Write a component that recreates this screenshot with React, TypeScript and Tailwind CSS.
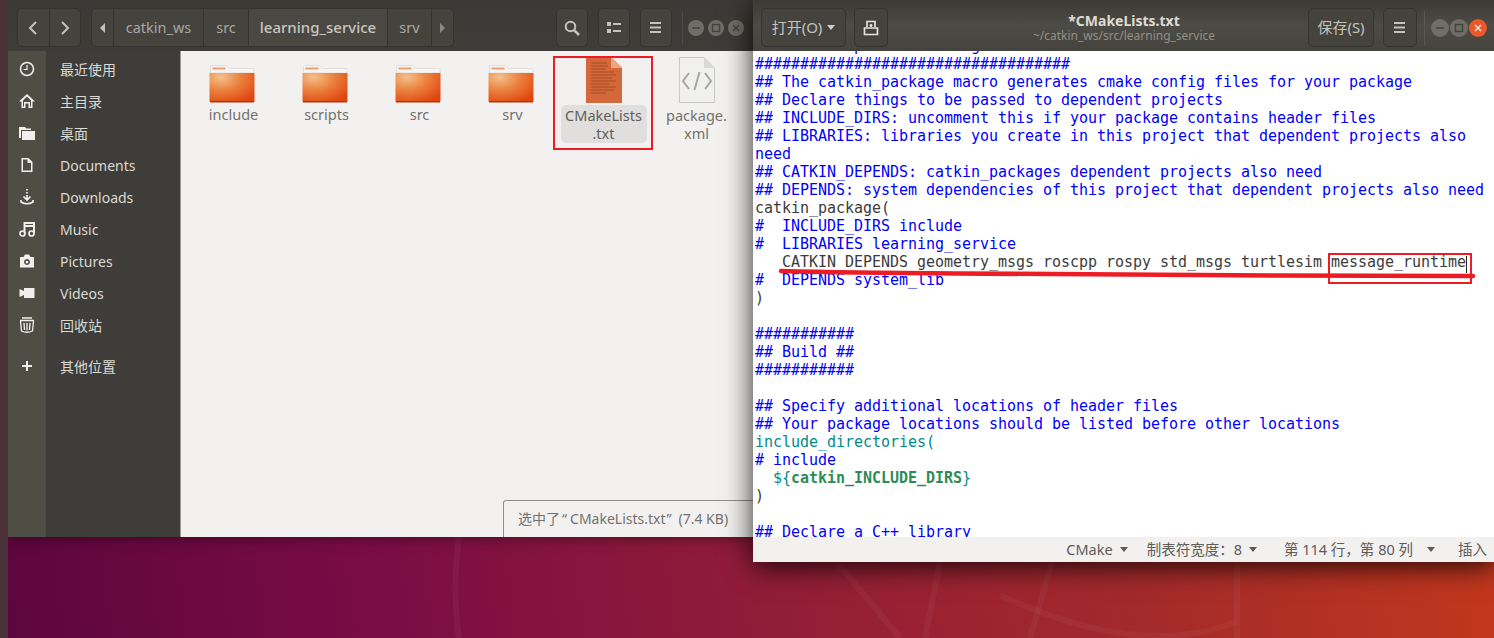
const sans = "font-['Noto_Sans','Noto_Sans_CJK_SC',sans-serif]";

const Folder = () => (
  <svg width="46" height="38" viewBox="0 0 46 38" className="mr-[4px]">
    <defs>
      <radialGradient id="fold" cx="0.25" cy="0.15" r="0.95">
        <stop offset="0" stopColor="#f3c08c" />
        <stop offset="0.45" stopColor="#ec8442" />
        <stop offset="1" stopColor="#e0470f" />
      </radialGradient>
    </defs>
    <path d="M1.500 8 V1.500 Q1.500 .5 2.500 .5 H17 L20 3.500 H44 Q45 3.500 45 4.500 V8 Z" fill="#f7f5f3" stroke="#d6d2ce" strokeWidth=".6" />
    <rect x="3.500" y="2.500" width="13" height="2" fill="#f0a070" />
    <path d="M.5 8 H45.500 V36 Q45.500 37 44.500 37 H1.500 Q.5 37 .5 36 Z" fill="url(#fold)" />
    <rect x="1" y="36" width="44" height="1.500" fill="#a83a10" />
  </svg>
);

const TextDoc = () => (
  <svg width="36" height="46" viewBox="0 0 36 46">
    <path d="M0 0 H25 L36 11 V46 H0 Z" fill="#d4683a" />
    <path d="M25 0 L36 11 H25 Z" fill="#eda57f" />
    <g stroke="#9d4420" strokeWidth=".8">
      <path d="M5 6 H21 M5 9 H22 M5 12 H19 M5 15 H28 M5 18 H30 M5 21 H26 M5 24 H30 M5 27 H23 M5 30 H30 M5 33 H28 M5 36 H20" />
    </g>
  </svg>
);

const XmlDoc = () => (
  <svg width="36" height="46" viewBox="0 0 36 46">
    <path d="M.5 .5 H25 L35.500 11 V45.500 H.5 Z" fill="#f0f0ee" stroke="#c8c8c4" />
    <path d="M25 .5 L35.500 11 H25 Z" fill="#d8d8d5" />
    <path d="M10 16 L4 24 L10 32 M26 16 L32 24 L26 32 M20.500 15 L15.500 33" fill="none" stroke="#a5a5a2" strokeWidth="2" />
  </svg>
);

const folders = ["include", "scripts", "src", "srv"];

const sideIcons: Record<string, React.ReactNode> = {
  recent: (
    <>
      <circle cx="8" cy="8" r="6.500" fill="none" stroke="currentColor" strokeWidth="1.500" />
      <path d="M8 4 V8.500 H4.500" fill="none" stroke="currentColor" strokeWidth="1.200" />
    </>
  ),
  home: <path d="M8 1 L16 8.500 H13.500 V15 H9.500 V10.500 H6.500 V15 H2.500 V8.500 H0 Z M4 7.500 V13.500 H5 V9 H11 V13.500 H12 V7.500 L8 3.500 Z" fill="currentColor" fillRule="evenodd" />,
  desk: (
    <>
      <path d="M0 2 H6 L7.500 3.500 H12 V5 H2 V13 H0 Z" fill="currentColor" />
      <rect x="3" y="6" width="13" height="9" fill="currentColor" />
    </>
  ),
  doc: <path d="M2.500 1 H9.500 L13.500 5 V15 H2.500 Z M4 2.500 V13.500 H12 V6 H8.500 V2.500 Z" fill="currentColor" fillRule="evenodd" />,
  down: (
    <path d="M8 0 V1.500 M8 3 V4.500 M8 6 V10 M4.500 7.500 L8 11 L11.500 7.500 M2 11 V13 Q8 16.500 14 13 V11" fill="none" stroke="currentColor" strokeWidth="1.700" />
  ),
  music: (
    <>
      <circle cx="3.500" cy="12.500" r="2.500" fill="none" stroke="currentColor" strokeWidth="1.700" />
      <circle cx="12.500" cy="12.500" r="2.500" fill="none" stroke="currentColor" strokeWidth="1.700" />
      <path d="M5.500 12 V2 H15 V12 M5.500 5 H15" fill="none" stroke="currentColor" strokeWidth="2" />
    </>
  ),
  camera: (
    <path d="M1 4 H4.500 L6 1.500 H10 L11.500 4 H15 V14.500 H1 Z M8 6 A3 3 0 1 0 8.010 6 Z M8 7.700 A1.400 1.400 0 1 1 7.990 7.700 Z" fill="currentColor" fillRule="evenodd" />
  ),
  video: <path d="M5 3 H15.500 V13 H5 V10 L.5 12 V4 L5 6 Z" fill="currentColor" />,
  trash: (
    <>
      <path d="M1 3.500 H15 M3 1 H13" fill="none" stroke="currentColor" strokeWidth="1.500" />
      <path d="M1.500 4 L2.500 14 Q8 16.500 13.500 14 L14.500 4 M5 6 L5.500 13 M8 6 V13.500 M11 6 L10.500 13" fill="none" stroke="currentColor" strokeWidth="1.300" />
    </>
  ),
  plus: <path d="M8 3 V13 M3 8 H13" fill="none" stroke="currentColor" strokeWidth="2" />,
};

const places = [
  { key: "recent", label: "最近使用" },
  { key: "home", label: "主目录" },
  { key: "desk", label: "桌面" },
  { key: "doc", label: "Documents" },
  { key: "down", label: "Downloads" },
  { key: "music", label: "Music" },
  { key: "camera", label: "Pictures" },
  { key: "video", label: "Videos" },
  { key: "trash", label: "回收站" },
];

const SideRow = ({ icon, label }: { icon: string; label: string }) => (
  <div className="flex h-8 items-center">
    <div className="flex w-[38px] justify-center">
      <svg width="16" height="16" viewBox="0 0 16 16" className="text-[#f0efec]">
        {sideIcons[icon]}
      </svg>
    </div>
    <span className="ml-[14px] text-[14px] text-[#dcd9d2]">{label}</span>
  </div>
);

const HeadBtn = ({ className, children }: { className: string; children?: React.ReactNode }) => (
  <div className={`flex h-[39px] items-center justify-center rounded-[5px] border border-[#34332f] bg-[#45433e] text-[#c4c2bc] ${className}`}>
    {children}
  </div>
);

const WinDot = ({ kind, size }: { kind: "min" | "max" | "close"; size: string }) => (
  <div className={`flex items-center justify-center rounded-full bg-[#6f6d67] ${size}`}>
    <svg width="10" height="10" viewBox="0 0 10 10" fill="none" stroke="#45433e" strokeWidth="1.500">
      {kind === "min" && <path d="M1 5 H9" />}
      {kind === "max" && <rect x="1.500" y="1.500" width="7" height="7" />}
      {kind === "close" && <path d="M2 2 L8 8 M8 2 L2 8" />}
    </svg>
  </div>
);

const Tri = ({ className }: { className?: string }) => (
  <span className={`inline-block h-0 w-0 border-x-[4.500px] border-t-[5px] border-x-transparent border-t-current ${className ?? ""}`} />
);

const FileManager = () => (
  <div className={`absolute left-2 top-0 flex h-[537px] w-[745px] flex-col shadow-[0_2px_12px_rgba(0,0,0,0.4)] ${sans}`}>
    {/* header */}
    <div className="flex h-[51px] items-center bg-gradient-to-b from-[#3b3a36] to-[#3d3c38] pt-[4px]">
      <HeadBtn className="ml-[9px] w-[64px]">
        <div className="flex flex-1 justify-center">
          <svg width="10" height="14" viewBox="0 0 10 14"><path d="M8 1 L2 7 L8 13" fill="none" stroke="currentColor" strokeWidth="2" /></svg>
        </div>
        <div className="h-full w-px bg-[#34332f]" />
        <div className="flex flex-1 justify-center">
          <svg width="10" height="14" viewBox="0 0 10 14"><path d="M2 1 L8 7 L2 13" fill="none" stroke="currentColor" strokeWidth="2" /></svg>
        </div>
      </HeadBtn>
      <HeadBtn className="ml-[10px] w-[363px] justify-start text-[14.500px]">
        <div className="flex h-full w-[22px] items-center justify-center border-r border-[#34332f]">
          <span className="h-0 w-0 border-y-[5px] border-r-[5px] border-y-transparent border-r-[#c4c2bc]" />
        </div>
        <div className="flex h-full w-[90px] items-center justify-center border-r border-[#34332f] text-[#a9a7a1]">catkin_ws</div>
        <div className="flex h-full w-[44px] items-center justify-center text-[#a9a7a1]">src</div>
        <div className="flex h-full w-[140px] items-center justify-center border-x border-[#34332f] bg-[#4a4843] text-[15px] font-medium text-[#c8c6c0]">learning_service</div>
        <div className="flex h-full w-[44px] items-center justify-center border-r border-[#34332f] text-[#a9a7a1]">srv</div>
        <div className="flex flex-1 justify-center">
          <span className="h-0 w-0 border-y-[5px] border-l-[5px] border-y-transparent border-l-[#8b8984]" />
        </div>
      </HeadBtn>
      <HeadBtn className="ml-[102px] w-[32px]">
        <svg width="16" height="16" viewBox="0 0 16 16"><circle cx="6.500" cy="6.500" r="4.800" fill="none" stroke="currentColor" strokeWidth="2" /><path d="M10 10 L15 15" stroke="currentColor" strokeWidth="2.500" /></svg>
      </HeadBtn>
      <HeadBtn className="ml-[10px] w-[32px]">
        <svg width="14" height="12" viewBox="0 0 14 12" fill="currentColor"><rect width="4" height="4" /><rect y="7" width="4" height="4" /><rect x="6" y="1" width="8" height="2" /><rect x="6" y="8" width="8" height="2" /></svg>
      </HeadBtn>
      <HeadBtn className="ml-[10px] w-[32px]">
        <svg width="12" height="12" viewBox="0 0 12 12" fill="currentColor"><rect width="11" height="2" /><rect y="4.500" width="11" height="2" /><rect y="9" width="11" height="2" /></svg>
      </HeadBtn>
      <div className="ml-[10px] h-[34px] w-px bg-[#4d4b46]" />
      <div className="ml-[5px] flex gap-[4px]">
        <WinDot kind="min" size="size-4" />
        <WinDot kind="max" size="size-4" />
        <WinDot kind="close" size="size-4" />
      </div>
    </div>
    <div className="flex min-h-0 flex-1">
      {/* sidebar */}
      <div className="relative flex w-[172px] flex-col bg-[#3e3d39] pt-[2px]">
        <div className="absolute inset-y-0 left-0 w-[38px] bg-[#4e4e45]" />
        <div className="relative">
          {places.map((p) => (
            <SideRow key={p.key} icon={p.key} label={p.label} />
          ))}
          <div className="mt-[9px]">
            <SideRow icon="plus" label="其他位置" />
          </div>
        </div>
      </div>
      <div className="w-px bg-[#9b9a96]" />
      {/* files */}
      <div className="relative flex-1 bg-[#f2f1f0]">
        <div className="flex pl-[6px] pt-[5px] text-[14.500px] leading-[18px] text-[#73726e]">
          {folders.map((f) => (
            <div key={f} className="flex w-[93px] flex-col items-center pt-[9px]">
              <Folder />
              <span className="mt-[2px]">{f}</span>
            </div>
          ))}
          <div className="-ml-[2px] flex w-[93px] flex-col items-center pt-px">
            <TextDoc />
            <div className="mt-[2px] w-[86px] rounded-[5px] bg-[#e0dfdd] py-px text-center text-[#5f5e5a]">
              CMakeLists<br />.txt
            </div>
          </div>
          <div className="flex w-[93px] flex-col items-center pt-px">
            <XmlDoc />
            <span className="mt-[3px] text-center">package.<br />xml</span>
          </div>
        </div>
        {/* red mark round the selected file */}
        <div className="absolute left-[372px] top-[5px] h-[94px] w-[100px] border-2 border-[#ed1c24]" />
        {/* selection note */}
        <div className="absolute bottom-0 left-[322px] h-[37px] w-[300px] rounded-t-[3px] border border-b-0 border-[#8f8e8a] bg-[#f2f1f0] pl-[14px] pt-[9px] text-[14px] leading-[18px] text-[#73726e]">
          选中了<span className="pl-[2px] pr-[3px]">“</span>CMakeLists.txt<span className="pl-[1px] pr-[7px]">”</span>(7.4 KB)
        </div>
      </div>
    </div>
  </div>
);

const BLUE = "text-[#0000ff]";
const DARK = "text-[#3c3c3c]";
const TEAL = "text-[#008a8c]";

const code: { text: string; cls: string }[] = [
  { text: "## catkin specific configuration ##", cls: BLUE },
  { text: "###################################", cls: BLUE },
  { text: "## The catkin_package macro generates cmake config files for your package", cls: BLUE },
  { text: "## Declare things to be passed to dependent projects", cls: BLUE },
  { text: "## INCLUDE_DIRS: uncomment this if your package contains header files", cls: BLUE },
  { text: "## LIBRARIES: libraries you create in this project that dependent projects also", cls: BLUE },
  { text: "need", cls: BLUE },
  { text: "## CATKIN_DEPENDS: catkin_packages dependent projects also need", cls: BLUE },
  { text: "## DEPENDS: system dependencies of this project that dependent projects also need", cls: BLUE },
  { text: "catkin_package(", cls: DARK },
  { text: "#  INCLUDE_DIRS include", cls: BLUE },
  { text: "#  LIBRARIES learning_service", cls: BLUE },
  { text: "   CATKIN_DEPENDS geometry_msgs roscpp rospy std_msgs turtlesim message_runtime", cls: DARK },
  { text: "#  DEPENDS system_lib", cls: BLUE },
  { text: ")", cls: DARK },
  { text: " ", cls: DARK },
  { text: "###########", cls: BLUE },
  { text: "## Build ##", cls: BLUE },
  { text: "###########", cls: BLUE },
  { text: " ", cls: DARK },
  { text: "## Specify additional locations of header files", cls: BLUE },
  { text: "## Your package locations should be listed before other locations", cls: BLUE },
  { text: "include_directories(", cls: TEAL },
  { text: "# include", cls: BLUE },
];

const Editor = () => (
  <div className={`absolute left-[753px] top-0 flex h-[562px] w-[741px] flex-col overflow-hidden shadow-[0_4px_26px_rgba(0,0,0,0.85)] ${sans}`}>
    <div className="relative flex h-[51px] items-center bg-gradient-to-b from-[#3b3a36] via-[#4d4b45] to-[#45433e] pt-[4px]">
      <HeadBtn className="ml-[8px] w-[85px] gap-[5px] text-[15px]">
        打开(O) <Tri className="text-[#d0cec8]" />
      </HeadBtn>
      <HeadBtn className="ml-[8px] w-[34px]">
        <svg width="16" height="16" viewBox="0 0 16 16" fill="none" stroke="#e4e2dc" strokeWidth="1.700">
          <path d="M4 7 V1.500 H12 V7 M1.500 8 H14.500 V14.500 H1.500 Z M8 4 V7 M6.500 5.500 H9.500" />
        </svg>
      </HeadBtn>
      <div className="flex-1 pl-[52px] text-center">
        <div className="text-[14px] font-bold leading-[16px] text-[#dfdbd2]">*CMakeLists.txt</div>
        <div className="text-[12px] leading-[14px] text-[#928f88]">~/catkin_ws/src/learning_service</div>
      </div>
      <HeadBtn className="w-[66px] text-[15px]">保存(S)</HeadBtn>
      <HeadBtn className="ml-[9px] w-[34px]">
        <svg width="12" height="12" viewBox="0 0 12 12" fill="currentColor"><rect width="11" height="2" /><rect y="4.500" width="11" height="2" /><rect y="9" width="11" height="2" /></svg>
      </HeadBtn>
      <div className="ml-[7px] h-[34px] w-px bg-[#5a5852]" />
      <div className="ml-[6px] mr-[7px] flex gap-px">
        <WinDot kind="min" size="size-[18px]" />
        <WinDot kind="max" size="size-[18px]" />
        <div className="flex size-[18px] items-center justify-center rounded-full bg-[#e9592a]">
          <svg width="10" height="10" viewBox="0 0 10 10" fill="none" stroke="#fbe4da" strokeWidth="1.500"><path d="M2 2 L8 8 M8 2 L2 8" /></svg>
        </div>
      </div>
    </div>
    <div className="relative min-h-0 flex-1 overflow-hidden bg-white">
      <div className="-mt-[14px] whitespace-pre pl-[2px] font-['DejaVu_Sans_Mono',monospace] text-[15px] leading-[18px] tracking-[-0.03px]">
        {code.map((l, i) => (
          <div key={i} className={`h-[18px] ${l.cls}`}>{l.text}</div>
        ))}
        <div className={`h-[18px] ${TEAL}`}>
          {"  ${"}<span className="font-bold text-[#2e8b57]">catkin_INCLUDE_DIRS</span>{"}"}
        </div>
        <div className={`h-[18px] ${DARK}`}>)</div>
        <div className="h-[18px]" />
        <div className={`h-[18px] ${BLUE}`}>## Declare a C++ library</div>
      </div>
      {/* caret after message_runtime */}
      <div className="absolute left-[713px] top-[205px] h-[17px] w-px bg-[#222]" />
      {/* red marks drawn over the shot */}
      <div className="absolute left-[575px] top-[202px] h-[31px] w-[144px] border-2 border-[#ed1c24]" />
      <svg className="absolute left-[25px] top-[212px]" width="700" height="18" viewBox="0 0 700 18">
        <path d="M3 8 C60 9.500 110 10 180 10.500 C300 11.500 400 12 500 12.500 C580 12.800 640 13 695 13" fill="none" stroke="#ed1c24" strokeWidth="4.500" strokeLinecap="round" />
      </svg>
    </div>
    <div className="flex h-[25px] items-center justify-end bg-[#f2f1f0] pr-[7px] text-[14.500px] leading-none text-[#5e5c58]">
      <span>CMake</span>
      <Tri className="ml-[7px] text-[#5e5c58]" />
      <span className="ml-[19px]">制表符宽度：8</span>
      <Tri className="ml-[7px] text-[#5e5c58]" />
      <span className="ml-[27px]">第 114 行，第 80 列</span>
      <Tri className="ml-[14px] text-[#5e5c58]" />
      <span className="ml-[23px]">插入</span>
    </div>
  </div>
);

const Wallpaper = () => (
  <svg className="absolute inset-0 size-full" viewBox="0 0 1494 638" preserveAspectRatio="none">
    <defs>
      <linearGradient id="wall" gradientUnits="userSpaceOnUse" x1="0" y1="638" x2="1494" y2="420">
        <stop offset="0" stopColor="#5c053e" />
        <stop offset="0.25" stopColor="#7a0c45" />
        <stop offset="0.5" stopColor="#911c38" />
        <stop offset="0.75" stopColor="#a32a2b" />
        <stop offset="1" stopColor="#c4381c" />
      </linearGradient>
    </defs>
    <rect width="1494" height="638" fill="url(#wall)" />
    <g fill="none" stroke="#ffffff" strokeOpacity="0.04" strokeWidth="6">
      <path d="M1000 595 Q1140 660 1236 622" />
      <path d="M1052 562 L1030 638" />
      <path d="M1237 562 V638" />
      <path d="M940 562 L925 638" />
      <path d="M835 560 L900 638" />
      <path d="M459 537 Q452 590 459 638" />
    </g>
  </svg>
);

export default function App() {
  return (
    <div className="relative h-[638px] w-[1494px] overflow-hidden bg-[#6a0944]">
      <Wallpaper />
      <FileManager />
      <div className="absolute inset-y-0 left-0 w-2 bg-[#4a3238]" />
      <Editor />
    </div>
  );
}
